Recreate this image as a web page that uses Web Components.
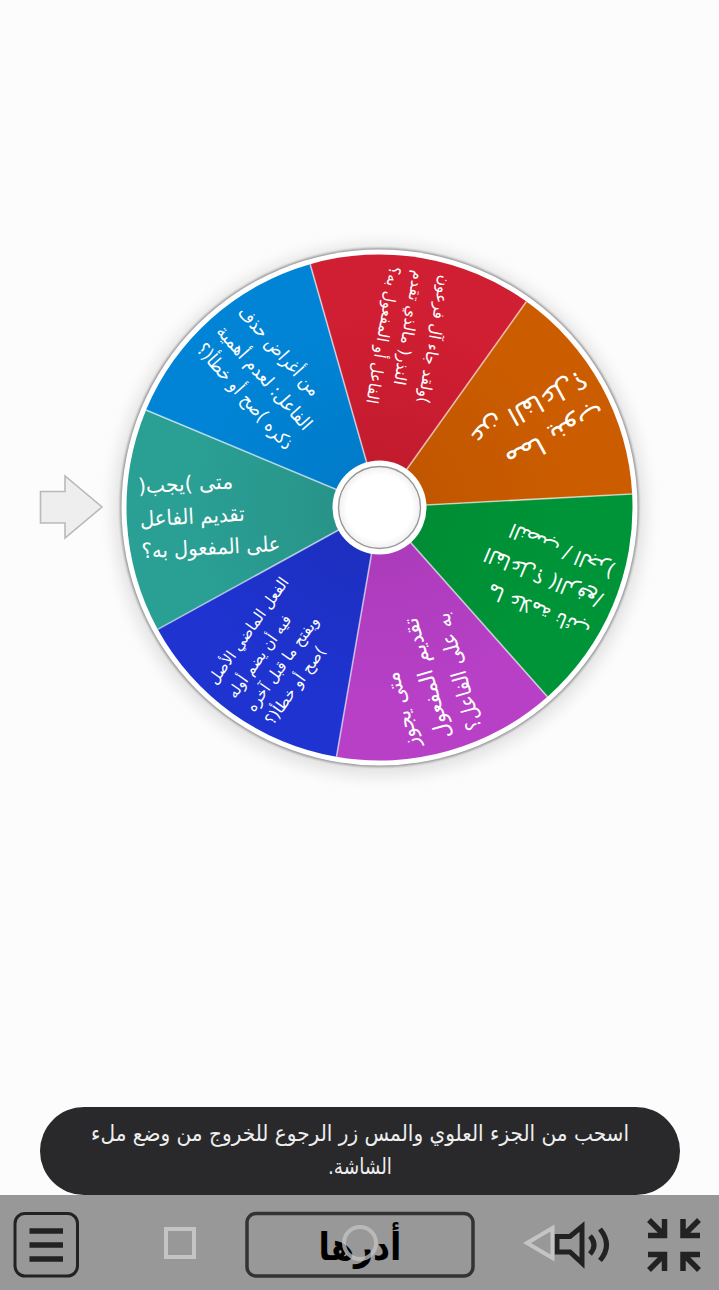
<!DOCTYPE html>
<html lang="ar">
<head>
<meta charset="utf-8">
<title>Wheel</title>
<style>
  body { margin: 0; background: #fcfcfc; }
</style>
</head>
<body>
<spin-app></spin-app>
<script>
const CX = 379.5, CY = 507.5, STEP = 360 / 7;

// from = direction where the slice starts; lines = [text, y, width] in the slice's own frame
const SLICES = [
  { from: 151.2, light: '#2a9f94', dark: '#289388', size: 21, lines: [['متى )يجب(', -27, 95], ['تقديم الفاعل', 6, 105], ['على المفعول به؟', 38, 139]] },
  { from: 202.65, light: '#0184d6', dark: '#007bc9', size: 18.5, lines: [['من أغراض حذف', -23, 113], ['الفاعل: لعدم أهمية', 6, 133], ['ذكره )صح أو خطأ(؟', 33, 135]] },
  { from: 254.1, light: '#d01e32', dark: '#c21b2e', size: 16, lines: [[')ولقد جاء آل فرعون', -20, 130], ['النذر( مالذي تقدم', 7, 116], ['الفاعل أو المفعول به؟', 31, 139]] },
  { from: 305.5, light: '#cb5c00', dark: '#c05600', size: 25, x: -243, lines: [['مما ينوب', -14, 109], ['عن الفاعل؟', 24, 130]] },
  { from: -3.05, light: '#009438', dark: '#008c34', size: 19.5, x: -241, lines: [['ما علامة نائب', -27, 109], ['الفاعل؟ )الرفع/', 5, 126], ['النصب / الجر(', 37, 112]] },
  { from: 48.4, light: '#b740c6', dark: '#ab3bba', size: 21, lines: [['متى يجوز', -27, 78], ['تقديم المفعول', 6, 125], ['به على الفاعل؟', 38, 121]] },
  { from: 99.8, light: '#1e33cf', dark: '#1d2fbf', size: 15.5, lines: [['الفعل الماضي الأصل', -30, 127], ['فيه أن يضم أوله', -6, 98], ['ويفتح ما قبل آخره', 17, 113], [')صح أو خطأ(؟', 40, 92]] },
];

function point(deg, r) {
  const a = deg * Math.PI / 180;
  return (CX + Math.cos(a) * r).toFixed(2) + ' ' + (CY + Math.sin(a) * r).toFixed(2);
}

class SpinWheel extends HTMLElement {
  constructor() {
    super();
    this.attachShadow({ mode: 'open' });
    const paths = SLICES.map((s, i) => `
      <path d="M${CX} ${CY} L${point(s.from, 253)} A253 253 0 0 1 ${point(s.from + STEP, 253)} Z" fill="url(#g${i})"/>`).join('');
    const seams = SLICES.map(s => `<path d="M${CX} ${CY} L${point(s.from, 253)}"/>`).join('');
    const grads = SLICES.map((s, i) => `
      <radialGradient id="g${i}" gradientUnits="userSpaceOnUse" cx="${CX}" cy="${CY}" r="253">
        <stop offset=".15" stop-color="${s.dark}"/><stop offset=".75" stop-color="${s.light}"/>
      </radialGradient>`).join('');
    const labels = SLICES.map(s => `
      <g transform="translate(${CX} ${CY}) rotate(${s.from + STEP / 2 + 180})" font-size="${s.size}">
        ${s.lines.map(([t, y, w]) => `<text x="${s.x || -240}" y="${y}" text-anchor="end" textLength="${w}" lengthAdjust="spacingAndGlyphs">${t}</text>`).join('')}
      </g>`).join('');
    this.shadowRoot.innerHTML = `
      <style>
        :host { display: block; }
        svg { display: block; }
        text { fill: #fff; direction: rtl; font-family: "DejaVu Sans", sans-serif; }
      </style>
      <svg width="719" height="1107" viewBox="0 0 719 1107">
        <defs>
          ${grads}
          <filter id="soft" x="-20%" y="-20%" width="140%" height="140%"><feGaussianBlur stdDeviation="8"/></filter>
          <filter id="edge" x="-20%" y="-20%" width="140%" height="140%"><feGaussianBlur stdDeviation="1.3"/></filter>
          <radialGradient id="hub" cx=".5" cy=".5" r=".5">
            <stop offset=".8" stop-color="#fff"/><stop offset="1" stop-color="#f0f0f0"/>
          </radialGradient>
        </defs>
        <circle cx="${CX}" cy="${CY + 3}" r="266" fill="#000" opacity=".1" filter="url(#soft)"/>
        <circle cx="${CX}" cy="${CY}" r="259.5" fill="#777" opacity=".7" filter="url(#edge)"/>
        <circle cx="${CX}" cy="${CY}" r="258" fill="#fff"/>
        ${paths}
        <g stroke="#fff" stroke-opacity=".6" stroke-width="1.6">${seams}</g>
        <circle cx="${CX}" cy="${CY}" r="47" fill="#fff"/>
        <circle cx="${CX}" cy="${CY}" r="41" fill="url(#hub)" stroke="#999" stroke-width="1.4"/>
        ${labels}
        <path d="M40.5 491.5 H65 V476 L102 507 L65 538 V523 H40.5 Z" fill="#eee" stroke="#b9b9b9" stroke-width="1.6"/>
      </svg>`;
  }
}

class ToastMessage extends HTMLElement {
  constructor() {
    super();
    this.attachShadow({ mode: 'open' });
    this.shadowRoot.innerHTML = `
      <style>
        :host {
          display: block;
          margin: 0 39px 0 40px;
          height: 88px;
          border-radius: 44px;
          background: #29292b;
        }
        svg { display: block; }
        text { fill: #eee; font: 22px "DejaVu Sans", sans-serif; direction: rtl; text-anchor: middle; }
      </style>
      <svg width="640" height="88">
        <text x="320" y="34" textLength="538" lengthAdjust="spacingAndGlyphs">اسحب من الجزء العلوي والمس زر الرجوع للخروج من وضع ملء</text>
        <text x="320" y="67" textLength="64" lengthAdjust="spacingAndGlyphs">الشاشة.</text>
      </svg>`;
  }
}

class ControlBar extends HTMLElement {
  constructor() {
    super();
    this.attachShadow({ mode: 'open' });
    this.shadowRoot.innerHTML = `
      <style>
        :host { display: block; height: 95px; background: #989898; }
        svg { display: block; }
        text { font: bold 38px "DejaVu Sans", sans-serif; direction: rtl; text-anchor: middle; }
      </style>
      <svg width="719" height="95" viewBox="0 1195 719 95" fill="none">
        <g stroke="#222">
          <rect x="15" y="1213.5" width="62.5" height="62.5" rx="10" stroke-width="3"/>
          <path d="M29.5 1231 H63 M29.5 1245 H63 M29.5 1259 H63" stroke-width="5.5"/>
          <rect x="247" y="1213.5" width="226" height="62.5" rx="9" stroke="#333" stroke-width="3.5"/>
          <path d="M557 1236.5 H570 L582 1226.5 V1263 L570 1252 H557 Z" stroke-width="5"/>
          <path d="M590 1236 Q598 1245 590 1254 M600 1229 Q613 1245 600 1260.5" stroke-width="5"/>
          <path d="M649 1220 L664 1235 M648 1235.5 H664.5 V1219 M699 1220 L684 1235 M700 1235.5 H683 V1219 M649 1270 L664 1255 M648 1254.5 H664.5 V1271 M699 1270 L684 1255 M700 1254.5 H683 V1271" stroke-width="5.5"/>
        </g>
        <text x="360" y="1260" fill="#000" textLength="83" lengthAdjust="spacingAndGlyphs">أدرها</text>
        <g stroke="#c4c4c4" stroke-width="4">
          <rect x="166" y="1229" width="28" height="28"/>
          <circle cx="360" cy="1243" r="16" stroke-opacity=".75"/>
          <path d="M552.5 1228 V1258 L527 1243 Z"/>
        </g>
      </svg>`;
  }
}

class SpinApp extends HTMLElement {
  constructor() {
    super();
    this.attachShadow({ mode: 'open' });
    this.shadowRoot.innerHTML = `
      <style>
        :host { display: flex; flex-direction: column; width: 719px; height: 1290px; overflow: hidden; }
      </style>
      <spin-wheel></spin-wheel>
      <toast-message></toast-message>
      <control-bar></control-bar>`;
  }
}

customElements.define('spin-wheel', SpinWheel);
customElements.define('toast-message', ToastMessage);
customElements.define('control-bar', ControlBar);
customElements.define('spin-app', SpinApp);
</script>
</body>
</html>
